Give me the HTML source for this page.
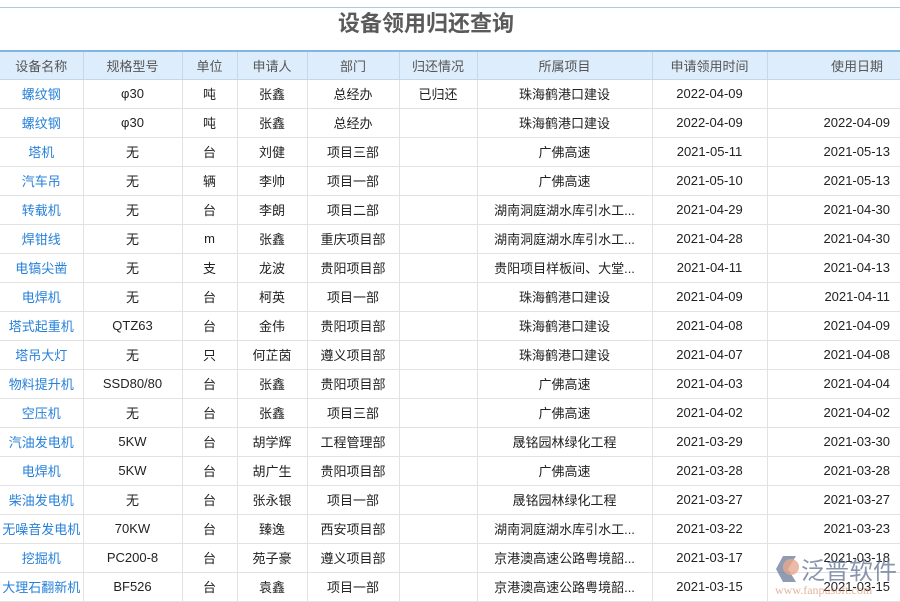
<!DOCTYPE html>
<html><head><meta charset="utf-8"><style>
*{margin:0;padding:0;box-sizing:border-box}
body{width:900px;height:600px;overflow:hidden;background:#fff;font-family:"Liberation Sans","Noto Sans CJK SC",sans-serif;position:relative}
.topline{position:absolute;top:7px;left:0;width:900px;height:1px;background:#a9cbe6}
h1{position:absolute;top:10px;left:338px;font-size:22px;font-weight:bold;color:#5a5a5a;line-height:28px}
table{position:absolute;top:50px;left:0;border-collapse:collapse;table-layout:fixed;width:900px;font-size:13px;color:#222}
th{height:28px;background:#deedfb;color:#555;font-weight:normal;border-top:2px solid #7fb6e3;border-left:1px solid #c3d8ea;border-bottom:1px solid #c3d8ea;padding:0}
td{height:29px;padding:0;text-align:center;border-left:1px solid #e2e2e2;border-bottom:1px solid #e2e2e2;white-space:nowrap;overflow:hidden}
th:first-child,td:first-child{border-left:none}
td:first-child{color:#2680d9}
td:last-child{text-align:right;padding-right:10px}
th:last-child{text-align:right;padding-right:17px}
.wm{position:absolute;left:772px;top:552px;width:128px;height:48px;opacity:.85}
</style></head><body>
<div class="topline"></div>
<h1>设备领用归还查询</h1>
<table>
<colgroup><col style="width:83px"><col style="width:99px"><col style="width:55px"><col style="width:70px"><col style="width:92px"><col style="width:78px"><col style="width:175px"><col style="width:115px"><col style="width:133px"></colgroup>
<tr><th>设备名称</th><th>规格型号</th><th>单位</th><th>申请人</th><th>部门</th><th>归还情况</th><th>所属项目</th><th>申请领用时间</th><th>使用日期</th></tr>
<tr><td>螺纹钢</td><td>φ30</td><td>吨</td><td>张鑫</td><td>总经办</td><td>已归还</td><td>珠海鹤港口建设</td><td>2022-04-09</td><td></td></tr>
<tr><td>螺纹钢</td><td>φ30</td><td>吨</td><td>张鑫</td><td>总经办</td><td></td><td>珠海鹤港口建设</td><td>2022-04-09</td><td>2022-04-09</td></tr>
<tr><td>塔机</td><td>无</td><td>台</td><td>刘健</td><td>项目三部</td><td></td><td>广佛高速</td><td>2021-05-11</td><td>2021-05-13</td></tr>
<tr><td>汽车吊</td><td>无</td><td>辆</td><td>李帅</td><td>项目一部</td><td></td><td>广佛高速</td><td>2021-05-10</td><td>2021-05-13</td></tr>
<tr><td>转载机</td><td>无</td><td>台</td><td>李朗</td><td>项目二部</td><td></td><td>湖南洞庭湖水库引水工...</td><td>2021-04-29</td><td>2021-04-30</td></tr>
<tr><td>焊钳线</td><td>无</td><td>m</td><td>张鑫</td><td>重庆项目部</td><td></td><td>湖南洞庭湖水库引水工...</td><td>2021-04-28</td><td>2021-04-30</td></tr>
<tr><td>电镐尖凿</td><td>无</td><td>支</td><td>龙波</td><td>贵阳项目部</td><td></td><td>贵阳项目样板间、大堂...</td><td>2021-04-11</td><td>2021-04-13</td></tr>
<tr><td>电焊机</td><td>无</td><td>台</td><td>柯英</td><td>项目一部</td><td></td><td>珠海鹤港口建设</td><td>2021-04-09</td><td>2021-04-11</td></tr>
<tr><td>塔式起重机</td><td>QTZ63</td><td>台</td><td>金伟</td><td>贵阳项目部</td><td></td><td>珠海鹤港口建设</td><td>2021-04-08</td><td>2021-04-09</td></tr>
<tr><td>塔吊大灯</td><td>无</td><td>只</td><td>何芷茵</td><td>遵义项目部</td><td></td><td>珠海鹤港口建设</td><td>2021-04-07</td><td>2021-04-08</td></tr>
<tr><td>物料提升机</td><td>SSD80/80</td><td>台</td><td>张鑫</td><td>贵阳项目部</td><td></td><td>广佛高速</td><td>2021-04-03</td><td>2021-04-04</td></tr>
<tr><td>空压机</td><td>无</td><td>台</td><td>张鑫</td><td>项目三部</td><td></td><td>广佛高速</td><td>2021-04-02</td><td>2021-04-02</td></tr>
<tr><td>汽油发电机</td><td>5KW</td><td>台</td><td>胡学辉</td><td>工程管理部</td><td></td><td>晟铭园林绿化工程</td><td>2021-03-29</td><td>2021-03-30</td></tr>
<tr><td>电焊机</td><td>5KW</td><td>台</td><td>胡广生</td><td>贵阳项目部</td><td></td><td>广佛高速</td><td>2021-03-28</td><td>2021-03-28</td></tr>
<tr><td>柴油发电机</td><td>无</td><td>台</td><td>张永银</td><td>项目一部</td><td></td><td>晟铭园林绿化工程</td><td>2021-03-27</td><td>2021-03-27</td></tr>
<tr><td>无噪音发电机</td><td>70KW</td><td>台</td><td>臻逸</td><td>西安项目部</td><td></td><td>湖南洞庭湖水库引水工...</td><td>2021-03-22</td><td>2021-03-23</td></tr>
<tr><td>挖掘机</td><td>PC200-8</td><td>台</td><td>苑子豪</td><td>遵义项目部</td><td></td><td>京港澳高速公路粤境韶...</td><td>2021-03-17</td><td>2021-03-18</td></tr>
<tr><td>大理石翻新机</td><td>BF526</td><td>台</td><td>袁鑫</td><td>项目一部</td><td></td><td>京港澳高速公路粤境韶...</td><td>2021-03-15</td><td>2021-03-15</td></tr>
</table>
<svg class="wm" viewBox="0 0 128 48">
<polygon points="4,17 11,4 24,4 16,17 24,30 11,30" fill="#5d6e8e" opacity=".8"/>
<circle cx="19" cy="15" r="8" fill="#e39a7a" opacity=".8"/>
<text x="29" y="27" font-size="24" fill="#5d6e8e" font-family="Noto Sans CJK SC, sans-serif" opacity=".85">泛普软件</text>
<text x="3" y="42" font-size="12" fill="#d4906e" font-family="Liberation Serif, serif" opacity=".8">www.fanpusoft.com</text>
</svg>
</body></html>
